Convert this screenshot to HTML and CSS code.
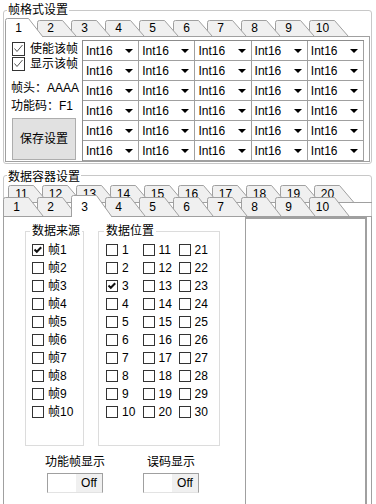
FILE: index.html
```html
<!DOCTYPE html>
<html lang="zh-CN">
<head>
<meta charset="utf-8">
<title>设置</title>
<link rel="stylesheet" href="styles.css">
</head>
<body>
<fieldset class="group group-frame">
  <legend>帧格式设置</legend>
  <div class="tabctl">
    <div class="tabrow row-single">
      <div class="tab sel first"><svg class="tshape" width="44" height="20"><path d="M0.5 19 V2.5 Q0.5 0.5 2.5 0.5 H23.5 L38 19"/></svg><span class="tl">1</span></div>
      <div class="tab"><svg class="tshape" width="44" height="20"><path d="M0.5 18 V4.5 Q0.5 2.5 2.5 2.5 H25.5 L39 18"/></svg><span class="tl">2</span></div>
      <div class="tab"><svg class="tshape" width="44" height="20"><path d="M0.5 18 V4.5 Q0.5 2.5 2.5 2.5 H25.5 L39 18"/></svg><span class="tl">3</span></div>
      <div class="tab"><svg class="tshape" width="44" height="20"><path d="M0.5 18 V4.5 Q0.5 2.5 2.5 2.5 H25.5 L39 18"/></svg><span class="tl">4</span></div>
      <div class="tab"><svg class="tshape" width="44" height="20"><path d="M0.5 18 V4.5 Q0.5 2.5 2.5 2.5 H25.5 L39 18"/></svg><span class="tl">5</span></div>
      <div class="tab"><svg class="tshape" width="44" height="20"><path d="M0.5 18 V4.5 Q0.5 2.5 2.5 2.5 H25.5 L39 18"/></svg><span class="tl">6</span></div>
      <div class="tab"><svg class="tshape" width="44" height="20"><path d="M0.5 18 V4.5 Q0.5 2.5 2.5 2.5 H25.5 L39 18"/></svg><span class="tl">7</span></div>
      <div class="tab"><svg class="tshape" width="44" height="20"><path d="M0.5 18 V4.5 Q0.5 2.5 2.5 2.5 H25.5 L39 18"/></svg><span class="tl">8</span></div>
      <div class="tab"><svg class="tshape" width="44" height="20"><path d="M0.5 18 V4.5 Q0.5 2.5 2.5 2.5 H25.5 L39 18"/></svg><span class="tl">9</span></div>
      <div class="tab"><svg class="tshape" width="44" height="20"><path d="M0.5 18 V4.5 Q0.5 2.5 2.5 2.5 H25.5 L39 18"/></svg><span class="tl">10</span></div>
    </div>
    <div class="pane pane-frame">
      <div class="frame-side">
        <div class="chk thin"><span class="box"><svg width="13" height="13"><path d="M2.5 6.5 L5 9.5 L10.5 3"/></svg></span><span>使能该帧</span></div>
        <div class="chk thin"><span class="box"><svg width="13" height="13"><path d="M2.5 6.5 L5 9.5 L10.5 3"/></svg></span><span>显示该帧</span></div>
        <div class="info info-head">帧头：<span>AAAA</span></div>
        <div class="info">功能码：<span>F1</span></div>
        <button class="save" type="button">保存设置</button>
      </div>
      <div class="grid">
        <div class="cell"><span>Int16</span><i class="arr"></i></div><div class="cell"><span>Int16</span><i class="arr"></i></div><div class="cell"><span>Int16</span><i class="arr"></i></div><div class="cell"><span>Int16</span><i class="arr"></i></div><div class="cell"><span>Int16</span><i class="arr"></i></div>
        <div class="cell"><span>Int16</span><i class="arr"></i></div><div class="cell"><span>Int16</span><i class="arr"></i></div><div class="cell"><span>Int16</span><i class="arr"></i></div><div class="cell"><span>Int16</span><i class="arr"></i></div><div class="cell"><span>Int16</span><i class="arr"></i></div>
        <div class="cell"><span>Int16</span><i class="arr"></i></div><div class="cell"><span>Int16</span><i class="arr"></i></div><div class="cell"><span>Int16</span><i class="arr"></i></div><div class="cell"><span>Int16</span><i class="arr"></i></div><div class="cell"><span>Int16</span><i class="arr"></i></div>
        <div class="cell"><span>Int16</span><i class="arr"></i></div><div class="cell"><span>Int16</span><i class="arr"></i></div><div class="cell"><span>Int16</span><i class="arr"></i></div><div class="cell"><span>Int16</span><i class="arr"></i></div><div class="cell"><span>Int16</span><i class="arr"></i></div>
        <div class="cell"><span>Int16</span><i class="arr"></i></div><div class="cell"><span>Int16</span><i class="arr"></i></div><div class="cell"><span>Int16</span><i class="arr"></i></div><div class="cell"><span>Int16</span><i class="arr"></i></div><div class="cell"><span>Int16</span><i class="arr"></i></div>
        <div class="cell"><span>Int16</span><i class="arr"></i></div><div class="cell"><span>Int16</span><i class="arr"></i></div><div class="cell"><span>Int16</span><i class="arr"></i></div><div class="cell"><span>Int16</span><i class="arr"></i></div><div class="cell"><span>Int16</span><i class="arr"></i></div>
      </div>
    </div>
  </div>
</fieldset>

<fieldset class="group group-data">
  <legend>数据容器设置</legend>
  <div class="tabctl tabctl-data">
    <div class="tabrow row-back">
      <div class="tab"><svg class="tshape" width="44" height="20"><path d="M0.5 19 V4.5 Q0.5 2.5 2.5 2.5 H25.5 L39.5 19"/></svg><span class="tl">11</span></div>
      <div class="tab"><svg class="tshape" width="44" height="20"><path d="M0.5 19 V4.5 Q0.5 2.5 2.5 2.5 H25.5 L39.5 19"/></svg><span class="tl">12</span></div>
      <div class="tab"><svg class="tshape" width="44" height="20"><path d="M0.5 19 V4.5 Q0.5 2.5 2.5 2.5 H25.5 L39.5 19"/></svg><span class="tl">13</span></div>
      <div class="tab"><svg class="tshape" width="44" height="20"><path d="M0.5 19 V4.5 Q0.5 2.5 2.5 2.5 H25.5 L39.5 19"/></svg><span class="tl">14</span></div>
      <div class="tab"><svg class="tshape" width="44" height="20"><path d="M0.5 19 V4.5 Q0.5 2.5 2.5 2.5 H25.5 L39.5 19"/></svg><span class="tl">15</span></div>
      <div class="tab"><svg class="tshape" width="44" height="20"><path d="M0.5 19 V4.5 Q0.5 2.5 2.5 2.5 H25.5 L39.5 19"/></svg><span class="tl">16</span></div>
      <div class="tab"><svg class="tshape" width="44" height="20"><path d="M0.5 19 V4.5 Q0.5 2.5 2.5 2.5 H25.5 L39.5 19"/></svg><span class="tl">17</span></div>
      <div class="tab"><svg class="tshape" width="44" height="20"><path d="M0.5 19 V4.5 Q0.5 2.5 2.5 2.5 H25.5 L39.5 19"/></svg><span class="tl">18</span></div>
      <div class="tab"><svg class="tshape" width="44" height="20"><path d="M0.5 19 V4.5 Q0.5 2.5 2.5 2.5 H25.5 L39.5 19"/></svg><span class="tl">19</span></div>
      <div class="tab"><svg class="tshape" width="44" height="20"><path d="M0.5 19 V4.5 Q0.5 2.5 2.5 2.5 H25.5 L39.5 19"/></svg><span class="tl">20</span></div>
    </div>
    <div class="tabrow row-front">
      <div class="tab"><svg class="tshape" width="44" height="23"><path d="M0.5 21 V4.5 Q0.5 2.5 2.5 2.5 H25.5 L40 21"/></svg><span class="tl">1</span></div>
      <div class="tab"><svg class="tshape" width="44" height="23"><path d="M0.5 21 V4.5 Q0.5 2.5 2.5 2.5 H25.5 L40 21"/></svg><span class="tl">2</span></div>
      <div class="tab sel"><svg class="tshape" width="44" height="23"><path d="M0.5 22 V2.5 Q0.5 0.5 2.5 0.5 H25.5 L41 22"/></svg><span class="tl">3</span></div>
      <div class="tab"><svg class="tshape" width="44" height="23"><path d="M0.5 21 V4.5 Q0.5 2.5 2.5 2.5 H25.5 L40 21"/></svg><span class="tl">4</span></div>
      <div class="tab"><svg class="tshape" width="44" height="23"><path d="M0.5 21 V4.5 Q0.5 2.5 2.5 2.5 H25.5 L40 21"/></svg><span class="tl">5</span></div>
      <div class="tab"><svg class="tshape" width="44" height="23"><path d="M0.5 21 V4.5 Q0.5 2.5 2.5 2.5 H25.5 L40 21"/></svg><span class="tl">6</span></div>
      <div class="tab"><svg class="tshape" width="44" height="23"><path d="M0.5 21 V4.5 Q0.5 2.5 2.5 2.5 H25.5 L40 21"/></svg><span class="tl">7</span></div>
      <div class="tab"><svg class="tshape" width="44" height="23"><path d="M0.5 21 V4.5 Q0.5 2.5 2.5 2.5 H25.5 L40 21"/></svg><span class="tl">8</span></div>
      <div class="tab"><svg class="tshape" width="44" height="23"><path d="M0.5 21 V4.5 Q0.5 2.5 2.5 2.5 H25.5 L40 21"/></svg><span class="tl">9</span></div>
      <div class="tab"><svg class="tshape" width="44" height="23"><path d="M0.5 21 V4.5 Q0.5 2.5 2.5 2.5 H25.5 L40 21"/></svg><span class="tl">10</span></div>
    </div>
    <div class="pane pane-data">
      <div class="page">
        <div class="subgroups">
          <fieldset class="sub sub-src">
            <legend>数据来源</legend>
            <div class="cblist">
              <div class="chk bold"><span class="box"><svg width="12" height="12"><path d="M2.5 5.5 L4.8 7.8 L9.2 3.2"/></svg></span><span>帧1</span></div>
              <div class="chk bold"><span class="box"></span><span>帧2</span></div>
              <div class="chk bold"><span class="box"></span><span>帧3</span></div>
              <div class="chk bold"><span class="box"></span><span>帧4</span></div>
              <div class="chk bold"><span class="box"></span><span>帧5</span></div>
              <div class="chk bold"><span class="box"></span><span>帧6</span></div>
              <div class="chk bold"><span class="box"></span><span>帧7</span></div>
              <div class="chk bold"><span class="box"></span><span>帧8</span></div>
              <div class="chk bold"><span class="box"></span><span>帧9</span></div>
              <div class="chk bold"><span class="box"></span><span>帧10</span></div>
            </div>
          </fieldset>
          <fieldset class="sub sub-pos">
            <legend>数据位置</legend>
            <div class="cbgrid">
              <div class="chk bold"><span class="box"></span><span>1</span></div>
              <div class="chk bold"><span class="box"></span><span>2</span></div>
              <div class="chk bold"><span class="box"><svg width="12" height="12"><path d="M2.5 5.5 L4.8 7.8 L9.2 3.2"/></svg></span><span>3</span></div>
              <div class="chk bold"><span class="box"></span><span>4</span></div>
              <div class="chk bold"><span class="box"></span><span>5</span></div>
              <div class="chk bold"><span class="box"></span><span>6</span></div>
              <div class="chk bold"><span class="box"></span><span>7</span></div>
              <div class="chk bold"><span class="box"></span><span>8</span></div>
              <div class="chk bold"><span class="box"></span><span>9</span></div>
              <div class="chk bold"><span class="box"></span><span>10</span></div>
              <div class="chk bold"><span class="box"></span><span>11</span></div>
              <div class="chk bold"><span class="box"></span><span>12</span></div>
              <div class="chk bold"><span class="box"></span><span>13</span></div>
              <div class="chk bold"><span class="box"></span><span>14</span></div>
              <div class="chk bold"><span class="box"></span><span>15</span></div>
              <div class="chk bold"><span class="box"></span><span>16</span></div>
              <div class="chk bold"><span class="box"></span><span>17</span></div>
              <div class="chk bold"><span class="box"></span><span>18</span></div>
              <div class="chk bold"><span class="box"></span><span>19</span></div>
              <div class="chk bold"><span class="box"></span><span>20</span></div>
              <div class="chk bold"><span class="box"></span><span>21</span></div>
              <div class="chk bold"><span class="box"></span><span>22</span></div>
              <div class="chk bold"><span class="box"></span><span>23</span></div>
              <div class="chk bold"><span class="box"></span><span>24</span></div>
              <div class="chk bold"><span class="box"></span><span>25</span></div>
              <div class="chk bold"><span class="box"></span><span>26</span></div>
              <div class="chk bold"><span class="box"></span><span>27</span></div>
              <div class="chk bold"><span class="box"></span><span>28</span></div>
              <div class="chk bold"><span class="box"></span><span>29</span></div>
              <div class="chk bold"><span class="box"></span><span>30</span></div>
            </div>
          </fieldset>
        </div>
        <div class="toggles">
          <div class="tg">
            <div class="tg-label">功能帧显示</div>
            <div class="switch"><span class="sw-btn">Off</span></div>
          </div>
          <div class="tg">
            <div class="tg-label">误码显示</div>
            <div class="switch"><span class="sw-btn">Off</span></div>
          </div>
        </div>
      </div>
      <div class="side-box"></div>
    </div>
  </div>
</fieldset>
</body>
</html>
```

FILE: styles.css
```css
* { box-sizing: border-box; }
html, body { margin: 0; padding: 0; }
body {
  width: 376px;
  height: 504px;
  overflow: hidden;
  background: #fff;
  color: #000;
  font-family: "Liberation Sans", "Noto Sans CJK SC", sans-serif;
  font-size: 12px;
  line-height: 16px;
}

/* group boxes */
.group {
  margin: 0 0 0 3px;
  width: 369px;
  min-width: 0;
  border: 1px solid #c8c8c8;
  border-radius: 3px;
  padding: 0 1px 1px;
}
.group > legend {
  padding: 0 1px;
  margin-left: 2px;
  line-height: 16px;
}
.group-frame { margin-top: 2px; }
.group-data {
  margin-top: 1px;
  height: 360px;
  padding-bottom: 0;
}
.group-data > legend { line-height: 18px; padding-top: 3px; }

/* tabs */
.tabrow {
  display: flex;
  position: relative;
  z-index: 1;
}
.row-single { height: 18px; }
.tab {
  position: relative;
  flex: none;
  width: 34px;
  height: 100%;
}
.tab.first { width: 32px; }
.tshape {
  position: absolute;
  left: 0;
  top: 0;
  overflow: visible;
}
.tshape path { fill: #f0f0f0; stroke: #a0a0a0; stroke-width: 1; }
.tab.sel .tshape path { fill: #fff; }
.tl {
  position: relative;
  display: block;
  width: 27px;
  text-align: center;
  line-height: 18px;
  padding-top: 1px;
}
.tab:nth-child(1) { z-index: 10; }
.tab:nth-child(2) { z-index: 9; }
.tab:nth-child(3) { z-index: 8; }
.tab:nth-child(4) { z-index: 7; }
.tab:nth-child(5) { z-index: 6; }
.tab:nth-child(6) { z-index: 5; }
.tab:nth-child(7) { z-index: 4; }
.tab:nth-child(8) { z-index: 3; }
.tab:nth-child(9) { z-index: 2; }
.tab:nth-child(10) { z-index: 1; }
.tab.sel { z-index: 20; }

.tabctl-data { margin: -3px -2px 0; }
.row-back {
  height: 20px;
  padding-left: 5px;
  border-bottom: 1px solid #a0a0a0;
}
.row-back .tl { padding-top: 2px; }
.row-front {
  height: 21px;
  margin-top: -8px;
  z-index: 2;
}
.row-front .tl { padding-top: 3px; }

/* panes */
.pane {
  border: 1px solid #a0a0a0;
  background: #fff;
}
.pane-frame {
  display: flex;
  padding: 3px 5px 0 5px;
}
.frame-side {
  width: 71px;
  flex: none;
  display: flex;
  flex-direction: column;
  padding-top: 1px;
}
.chk {
  display: flex;
  align-items: center;
  white-space: nowrap;
}
.chk .box {
  flex: none;
  display: block;
  background: #fff;
  border: 1px solid #333;
}
.chk .box svg { display: block; margin: -1px; }
.chk.thin { height: 15px; margin-left: 1px; }
.chk.thin .box { width: 13px; height: 14px; margin-right: 5px; }
.chk.thin path { fill: none; stroke: #555; stroke-width: 1; }
.chk.bold { height: 18.1px; }
.chk.bold .box { width: 12px; height: 12px; margin-right: 4px; border-color: #333; }
.chk.bold path { fill: none; stroke: #111; stroke-width: 2; }

.info { line-height: 16px; margin-top: 2px; white-space: nowrap; }
.info-head { margin-top: 9px; }
.save {
  margin: 4px 0 0 1px;
  width: 64px;
  height: 42px;
  padding: 0;
  background: #e1e1e1;
  border: 1px solid #adadad;
  border-radius: 0;
  font: inherit;
  color: #000;
}

.grid {
  width: 282px;
  flex: none;
  display: grid;
  grid-template-columns: repeat(5, 1fr);
  grid-auto-rows: 20px;
  border-top: 1px solid #8c8c8c;
  border-left: 1px solid #8c8c8c;
}
.cell {
  display: flex;
  align-items: center;
  justify-content: space-between;
  padding: 1px 5px 0 3px;
  border-right: 1px solid #a0a0a0;
  border-bottom: 1px solid #a0a0a0;
  background: #fff;
}
.arr {
  width: 0;
  height: 0;
  border-left: 4px solid transparent;
  border-right: 4px solid transparent;
  border-top: 4px solid #000;
}

/* data pane */
.pane-data {
  display: flex;
  height: 300px;
  border-bottom: none;
}
.page {
  width: 241px;
  flex: none;
  padding-top: 6px;
}
.subgroups {
  display: flex;
  gap: 14px;
  padding-left: 21px;
}
.sub {
  margin: 0;
  min-width: 0;
  border: 1px solid #dcdcdc;
  height: 223px;
  padding: 0;
}
.sub > legend { padding: 0 2px; line-height: 16px; }
.sub-src { width: 59px; }
.sub-src > legend { margin-left: 4px; }
.sub-pos { width: 122px; }
.sub-pos > legend { margin-left: 5px; }
.cblist { padding: 1.5px 0 0 6px; }
.cbgrid {
  display: grid;
  grid-template-columns: 36.5px 36px auto;
  grid-template-rows: repeat(10, 18.1px);
  grid-auto-flow: column;
  padding: 1.5px 0 0 7px;
}

.toggles {
  display: flex;
  padding-left: 23px;
  margin-top: 8px;
}
.tg {
  width: 96px;
  display: flex;
  flex-direction: column;
  align-items: center;
}
.tg-label { line-height: 16px; }
.switch {
  margin-top: 3px;
  width: 56px;
  height: 20px;
  display: flex;
  justify-content: flex-end;
  border: 1px solid #a0a0a0;
  border-bottom-color: #e3e3e3;
  background: #fff;
}
.sw-btn {
  width: 26px;
  background: #f0f0f0;
  text-align: center;
  line-height: 18px;
}

.side-box {
  width: 122px;
  flex: none;
  margin-right: 3px;
  border-left: 1px solid #a0a0a0;
  border-top: 2px solid #a0a0a0;
  border-right: 2px solid #a0a0a0;
}
```
